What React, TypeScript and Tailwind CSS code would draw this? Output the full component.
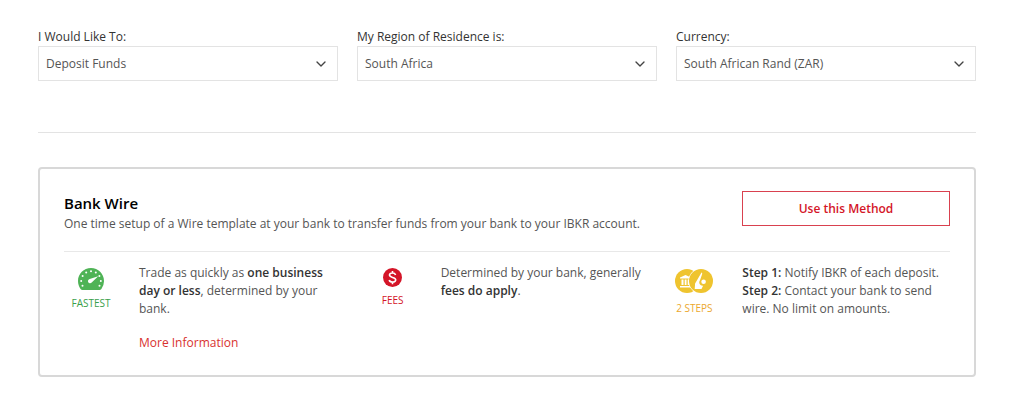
import React from 'react'
import { FiChevronDown } from 'react-icons/fi'

type Field = {
  id: string
  label: string
  options: string[]
}

const fields: Field[] = [
  { id: 'action', label: 'I Would Like To:', options: ['Deposit Funds'] },
  { id: 'region', label: 'My Region of Residence is:', options: ['South Africa'] },
  { id: 'currency', label: 'Currency:', options: ['South African Rand (ZAR)'] }
]

function GaugeIcon() {
  return (
    <svg width="26" height="22" viewBox="0 0 26 22" aria-hidden="true">
      <path
        d="M13 0C5.8 0 0 5.8 0 13c0 3 1 5.7 2.6 7.9.6.8 1.2 1.1 2.2 1.1h16.4c1 0 1.6-.3 2.2-1.1A13 13 0 0 0 26 13C26 5.8 20.2 0 13 0z"
        fill="#4fb356"
      />
      <g fill="#fff">
        <circle cx="13" cy="3.2" r="1" />
        <circle cx="8.2" cy="4.4" r="1" />
        <circle cx="17.8" cy="4.4" r="1" />
        <circle cx="4.6" cy="8" r="1" />
        <circle cx="21.4" cy="8" r="1" />
        <circle cx="3.2" cy="13" r="1" />
        <circle cx="22.8" cy="13" r="1" />
        <circle cx="4.5" cy="17.8" r="1" />
        <circle cx="21.5" cy="17.8" r="1" />
        <path d="M20.2 8.3l-8.5 2.7a2.1 2.1 0 1 0 2 3.4z" />
      </g>
    </svg>
  )
}

function DollarIcon() {
  return (
    <svg width="19" height="19" viewBox="0 0 19 19" aria-hidden="true">
      <circle cx="9.5" cy="9.5" r="9.5" fill="#d41528" />
      <path
        d="M12.6 6.9c-.4-1.2-1.5-1.9-3.1-1.9-1.8 0-3 .8-3 2.1 0 3 6.2 1.6 6.2 4.7 0 1.5-1.3 2.3-3.2 2.3-1.8 0-3-.8-3.3-2.1M9.5 2.9V5M9.5 14v2.2"
        fill="none"
        stroke="#fff"
        strokeWidth="1.6"
      />
    </svg>
  )
}

function StepsIcon() {
  return (
    <svg width="38" height="24" viewBox="0 0 38 24" aria-hidden="true">
      <circle cx="12" cy="12" r="12" fill="#efc42f" />
      <path
        d="M5 8.5L10.5 6l5.5 2.5v1H5zM6.5 10.5h2v5.5h-2zM9.7 10.5h1.8v5.5H9.7zM12.7 10.5h2v5.5h-2zM5 17h11v1.5H5z"
        fill="#fff"
      />
      <circle cx="26" cy="12" r="12.6" fill="#fff" />
      <circle cx="26" cy="12" r="12" fill="#efc42f" />
      <path
        d="M26.5 3.5c.8.3.9 1 .5 2l-1.8 5.2c-1.4 2-1.2 4.3.3 5.3 1 .8 1.8.9 2.6.7L26.5 20h-6.8l.4-5.5z"
        fill="#fff"
      />
      <circle cx="28.6" cy="12.8" r="2.3" fill="#fff" />
    </svg>
  )
}

export default function App() {
  return (
    <main className="bg-white pt-7 pb-9 pl-[38px] pr-12 font-['Open_Sans',sans-serif] text-xs leading-[18px] text-[#555]">
      {/* Filters */}
      <form className="grid grid-cols-3 gap-[19px] border-b border-[#e3e3e3] pb-[51px]">
        {fields.map((field) => (
          <div key={field.id}>
            <label htmlFor={field.id} className="block text-[#333]">
              {field.label}
            </label>
            <div className="relative">
              <select
                id={field.id}
                className="block h-[35px] w-full appearance-none border border-[#e3e3e3] bg-white pl-[7px] pr-8 text-[#555]"
              >
                {field.options.map((option) => (
                  <option key={option}>{option}</option>
                ))}
              </select>
              <FiChevronDown className="pointer-events-none absolute right-[9px] top-2.5 h-4 w-4 text-[#444]" />
            </div>
          </div>
        ))}
      </form>

      {/* Funding method */}
      <section className="mt-[34px] rounded border-2 border-[#d8d8d8] px-6 pt-[22px] pb-[23px]">
        <header className="flex items-start justify-between border-b border-[#e8e8e8] pb-[18px]">
          <div>
            <h2 className="text-[15px] font-semibold leading-6 text-black">Bank Wire</h2>
            <p>
              One time setup of a Wire template at your bank to transfer funds from your bank to
              your IBKR account.
            </p>
          </div>
          <button
            type="button"
            className="h-[35px] w-52 cursor-pointer border border-[#d9414f] font-semibold text-[#d41528]"
          >
            Use this Method
          </button>
        </header>

        <div className="grid grid-cols-3 gap-[19px] pt-3">
          <div className="flex gap-[21px]">
            <div className="flex w-[54px] shrink-0 flex-col items-center gap-[7px] pt-1">
              <GaugeIcon />
              <span className="text-[10px] leading-3 text-[#3aa04a]">FASTEST</span>
            </div>
            <div className="pr-4">
              <p>
                Trade as quickly as{' '}
                <b className="font-semibold text-[#333]">one business day or less</b>, determined by
                your bank.
              </p>
              <a href="#" className="mt-4 inline-block text-[#d8322f]">
                More Information
              </a>
            </div>
          </div>

          <div className="flex gap-[21px]">
            <div className="flex w-[54px] shrink-0 flex-col items-center gap-[7px] pt-1">
              <DollarIcon />
              <span className="text-[10px] leading-3 text-[#d41528]">FEES</span>
            </div>
            <p>
              Determined by your bank, generally{' '}
              <b className="font-semibold text-[#333]">fees do apply</b>.
            </p>
          </div>

          <div className="flex gap-[21px]">
            <div className="flex w-[54px] shrink-0 flex-col items-center gap-[9px] pt-[5px]">
              <StepsIcon />
              <span className="text-[10px] leading-3 text-[#eba82e]">2 STEPS</span>
            </div>
            <p>
              <b className="font-semibold text-[#333]">Step 1:</b> Notify IBKR of each deposit.
              <br />
              <b className="font-semibold text-[#333]">Step 2:</b> Contact your bank to send wire.
              No limit on amounts.
            </p>
          </div>
        </div>
      </section>
    </main>
  )
}
